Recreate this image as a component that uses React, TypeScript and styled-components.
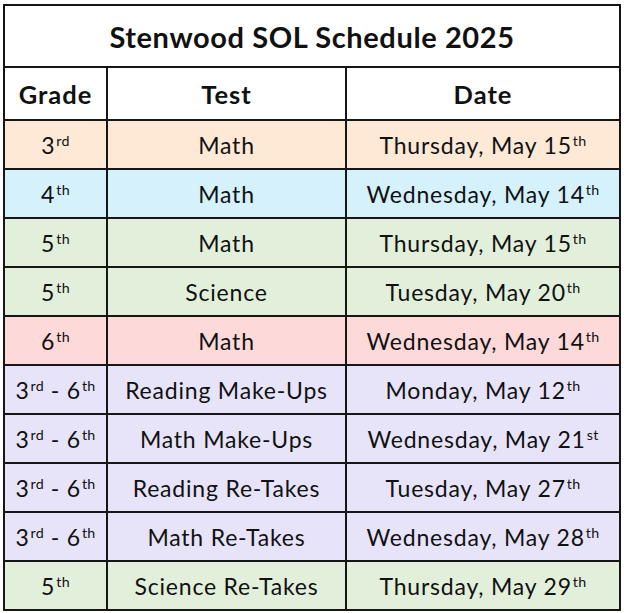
import React from "react";
import styled, { createGlobalStyle } from "styled-components";

type Tone = "peach" | "blue" | "green" | "pink" | "lavender";

const tones: Record<Tone, string> = {
  peach: "#fde9d6",
  blue: "#d4f1fc",
  green: "#e2efda",
  pink: "#fdd9d9",
  lavender: "#e7e4fa",
};

interface Entry {
  grade: React.ReactNode;
  test: string;
  day: string;
  num: string;
  suffix: string;
  tone: Tone;
}

const GlobalStyle = createGlobalStyle`
  html, body {
    margin: 0;
    padding: 0;
    background: #fff;
  }
  body {
    font-family: Lato, "Open Sans", "Liberation Sans", sans-serif;
    color: #111;
  }
`;

const Page = styled.div`
  padding: 4px 0 0 3px;
  border-top: 2px solid #e4e4e4;
  margin-top: -2px;
`;

const Table = styled.table`
  width: 616px;
  border-collapse: collapse;
  table-layout: fixed;
  border: 2px solid #161616;
`;

const TitleCell = styled.th`
  height: 60px;
  font-size: 29px;
  font-weight: 700;
  letter-spacing: 0.6px;
  text-align: center;
  border: 2px solid #161616;
  padding: 0;
`;

const HeadCell = styled.th`
  height: 51px;
  font-size: 25.5px;
  font-weight: 700;
  letter-spacing: 1px;
  text-align: center;
  border: 2px solid #161616;
  padding: 0;
`;

const Row = styled.tr<{ $tone: Tone }>`
  background: ${(p) => tones[p.$tone]};
`;

const Cell = styled.td`
  height: 47px;
  font-size: 23px;
  letter-spacing: 0.8px;
  text-align: center;
  border: 2px solid #161616;
  padding: 0;
  white-space: nowrap;
`;

const Sup = styled.sup`
  font-size: 0.62em;
  vertical-align: 0.55em;
  line-height: 0;
  letter-spacing: 0.3px;
  margin-left: 1px;
`;

const ord = (n: string, s: string) => (
  <>
    {n}
    <Sup>{s}</Sup>
  </>
);

const range = (
  <>
    {ord("3", "rd")} - {ord("6", "th")}
  </>
);

const entries: Entry[] = [
  { grade: ord("3", "rd"), test: "Math", day: "Thursday", num: "15", suffix: "th", tone: "peach" },
  { grade: ord("4", "th"), test: "Math", day: "Wednesday", num: "14", suffix: "th", tone: "blue" },
  { grade: ord("5", "th"), test: "Math", day: "Thursday", num: "15", suffix: "th", tone: "green" },
  { grade: ord("5", "th"), test: "Science", day: "Tuesday", num: "20", suffix: "th", tone: "green" },
  { grade: ord("6", "th"), test: "Math", day: "Wednesday", num: "14", suffix: "th", tone: "pink" },
  { grade: range, test: "Reading Make-Ups", day: "Monday", num: "12", suffix: "th", tone: "lavender" },
  { grade: range, test: "Math Make-Ups", day: "Wednesday", num: "21", suffix: "st", tone: "lavender" },
  { grade: range, test: "Reading Re-Takes", day: "Tuesday", num: "27", suffix: "th", tone: "lavender" },
  { grade: range, test: "Math Re-Takes", day: "Wednesday", num: "28", suffix: "th", tone: "lavender" },
  { grade: ord("5", "th"), test: "Science Re-Takes", day: "Thursday", num: "29", suffix: "th", tone: "green" },
];

export default function App() {
  return (
    <Page>
      <GlobalStyle />
      <Table>
        <colgroup>
          <col style={{ width: 103 }} />
          <col style={{ width: 239 }} />
          <col style={{ width: 274 }} />
        </colgroup>
        <thead>
          <tr>
            <TitleCell colSpan={3}>Stenwood SOL Schedule 2025</TitleCell>
          </tr>
          <tr>
            <HeadCell>Grade</HeadCell>
            <HeadCell>Test</HeadCell>
            <HeadCell>Date</HeadCell>
          </tr>
        </thead>
        <tbody>
          {entries.map((e, i) => (
            <Row key={i} $tone={e.tone}>
              <Cell>{e.grade}</Cell>
              <Cell>{e.test}</Cell>
              <Cell>
                {e.day}, May {ord(e.num, e.suffix)}
              </Cell>
            </Row>
          ))}
        </tbody>
      </Table>
    </Page>
  );
}
